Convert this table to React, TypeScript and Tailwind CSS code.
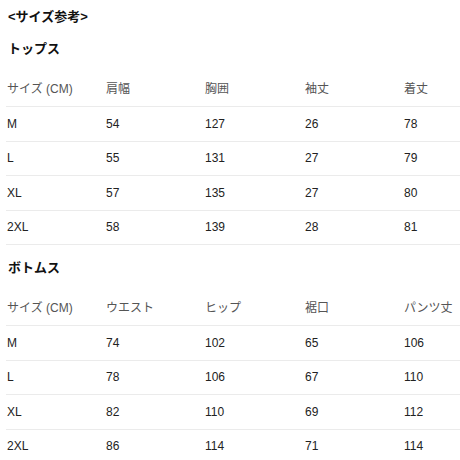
const font = { fontFamily: '"Liberation Sans", "Noto Sans CJK JP", sans-serif' };

type Table = { title: string; head: string[]; rows: string[][] };

const tables: Table[] = [
  {
    title: 'トップス',
    head: ['サイズ (CM)', '肩幅', '胸囲', '袖丈', '着丈'],
    rows: [
      ['M', '54', '127', '26', '78'],
      ['L', '55', '131', '27', '79'],
      ['XL', '57', '135', '27', '80'],
      ['2XL', '58', '139', '28', '81'],
    ],
  },
  {
    title: 'ボトムス',
    head: ['サイズ (CM)', 'ウエスト', 'ヒップ', '裾口', 'パンツ丈'],
    rows: [
      ['M', '74', '102', '65', '106'],
      ['L', '78', '106', '67', '110'],
      ['XL', '82', '110', '69', '112'],
      ['2XL', '86', '114', '71', '114'],
    ],
  },
];

function SizeTable({ table, first }: { table: Table; first: boolean }) {
  return (
    <section className={first ? '' : 'mt-[7px]'}>
      <h2 className="flex h-[32px] items-center pl-[2px] text-[13px] font-bold text-[#111]">{table.title}</h2>
      <div className="mt-[6px]">
        <div className="grid h-[36px] grid-cols-[99px_99px_100px_99px_1fr] items-center border-b border-[#ebebeb] text-[12px] text-[#555]">
          {table.head.map((h) => (
            <div key={h} className="pl-[1px]">{h}</div>
          ))}
        </div>
        {table.rows.map((row) => (
          <div
            key={row[0]}
            className="grid h-[34.5px] grid-cols-[99px_99px_100px_99px_1fr] items-center border-b border-[#ebebeb] text-[12px] text-[#222]"
          >
            {row.map((c, i) => (
              <div key={i} className="pl-[1px]">{c}</div>
            ))}
          </div>
        ))}
      </div>
    </section>
  );
}

export default function App() {
  return (
    <div className="h-[460px] w-[460px] overflow-hidden bg-white pl-[6px]" style={font}>
      <h1 className="flex h-[33px] items-center pl-[2px] text-[13px] font-bold text-[#111]">&lt;サイズ参考&gt;</h1>
      {tables.map((t, i) => (
        <SizeTable key={t.title} table={t} first={i === 0} />
      ))}
    </div>
  );
}
